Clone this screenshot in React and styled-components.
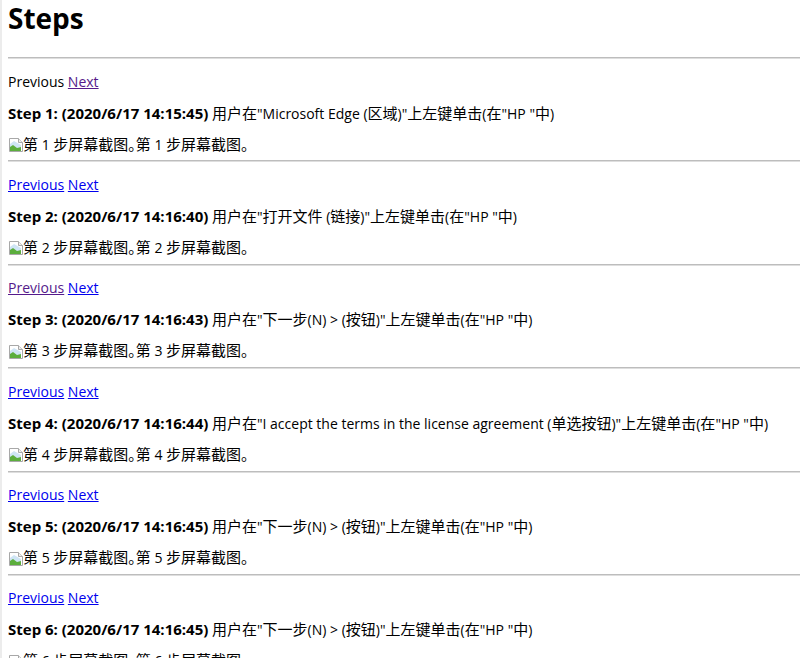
import React from "react";
import styled, { createGlobalStyle } from "styled-components";

const GlobalStyle = createGlobalStyle`
  html, body {
    margin: 0;
    padding: 0;
    background: #fff;
    overflow: hidden;
  }
  body {
    font-family: "Open Sans", "Noto Sans CJK SC", sans-serif;
    color: #000;
  }
`;

const steps = [
  { time: "14:15:45", target: "Microsoft Edge (区域)", prev: "none", next: "visited" },
  { time: "14:16:40", target: "打开文件 (链接)", prev: "link", next: "link" },
  { time: "14:16:43", target: "下一步(N) > (按钮)", prev: "visited", next: "link" },
  { time: "14:16:44", target: "I accept the terms in the license agreement (单选按钮)", prev: "link", next: "link" },
  { time: "14:16:45", target: "下一步(N) > (按钮)", prev: "link", next: "link" },
  { time: "14:16:45", target: "下一步(N) > (按钮)", prev: "link", next: "link" },
];

// Han runs are set a touch larger than the latin text, like YaHei next to Segoe UI
const HAN = /([\u2e80-\u9fff\u3000-\u303f\uff00-\uffef]+)/;

function Mixed({ text }) {
  return text
    .split(HAN)
    .map((part, i) => (i % 2 === 1 ? <Han key={i}>{part}</Han> : part));
}

function BrokenImage() {
  return (
    <svg width="14" height="14" viewBox="0 0 14 14">
      <path d="M0.5 0.5 H9.5 L13.5 4.5 V13.5 H0.5 Z" fill="#fff" stroke="#a8a8a8" />
      <path d="M9.5 0.5 V4.5 H13.5" fill="#eee" stroke="#a8a8a8" />
      <path d="M1 6 L5 3 L12 7 V13 H1 Z" fill="#cfe5f5" />
      <path d="M1 13 V9 L4 7 L8 10 L12 9 V13 Z" fill="#5cae3d" />
    </svg>
  );
}

export default function App() {
  return (
    <Page>
      <GlobalStyle />
      <Title>Steps</Title>
      {steps.map((s, i) => (
        <Step key={i}>
          <Rule />
          <Nav>
            {s.prev === "none" ? (
              <span>Previous</span>
            ) : (
              <NavLink href="#" $visited={s.prev === "visited"}>
                Previous
              </NavLink>
            )}{" "}
            <NavLink href="#" $visited={s.next === "visited"}>
              Next
            </NavLink>
          </Nav>
          <Line>
            <b>
              Step {i + 1}: (2020/6/17 {s.time})
            </b>{" "}
            <Mixed text={`用户在"${s.target}"上左键单击(在"HP "中)`} />
          </Line>
          <Shot>
            <BrokenImage />
            <span>
              <Mixed text={`第 ${i + 1} 步屏幕截图。第 ${i + 1} 步屏幕截图。`} />
            </span>
          </Shot>
        </Step>
      ))}
    </Page>
  );
}

const Page = styled.div`
  border-left: 2px solid #ececec;
  padding-left: 6px;
  min-height: 658px;
  box-sizing: border-box;
`;

const Title = styled.h1`
  margin: 0 0 21px;
  font-size: 28px;
  line-height: 36px;
  font-weight: 700;
`;

const Step = styled.section`
  display: flex;
  flex-direction: column;
`;

const Rule = styled.hr`
  margin: 0 0 12.5px;
  height: 0;
  border: none;
  border-top: 1px solid #bdbdbd;
  border-bottom: 1px solid #dedede;
`;

const Nav = styled.p`
  margin: 0 0 12px;
  font-size: 14px;
  line-height: 20px;
  height: 20px;
`;

const NavLink = styled.a`
  color: ${(p) => (p.$visited ? "#551a8b" : "#0000ee")};
  text-decoration: underline;
`;

const Han = styled.span`
  font-size: 15px;
  line-height: 1;
  font-feature-settings: "halt";
`;

const Line = styled.p`
  margin: 0 0 10px;
  font-size: 14px;
  line-height: 20px;
  height: 20px;
  white-space: nowrap;

  b {
    font-size: 15px;
    line-height: 1;
    font-weight: 700;
  }
`;

const Shot = styled.p`
  margin: 0 0 5.9px;
  padding-top: 1px;
  font-size: 14px;
  line-height: 20px;
  height: 20px;
  display: flex;
  align-items: center;

  svg {
    margin: 1px 0 0 1px;
    flex-shrink: 0;
  }
`;
